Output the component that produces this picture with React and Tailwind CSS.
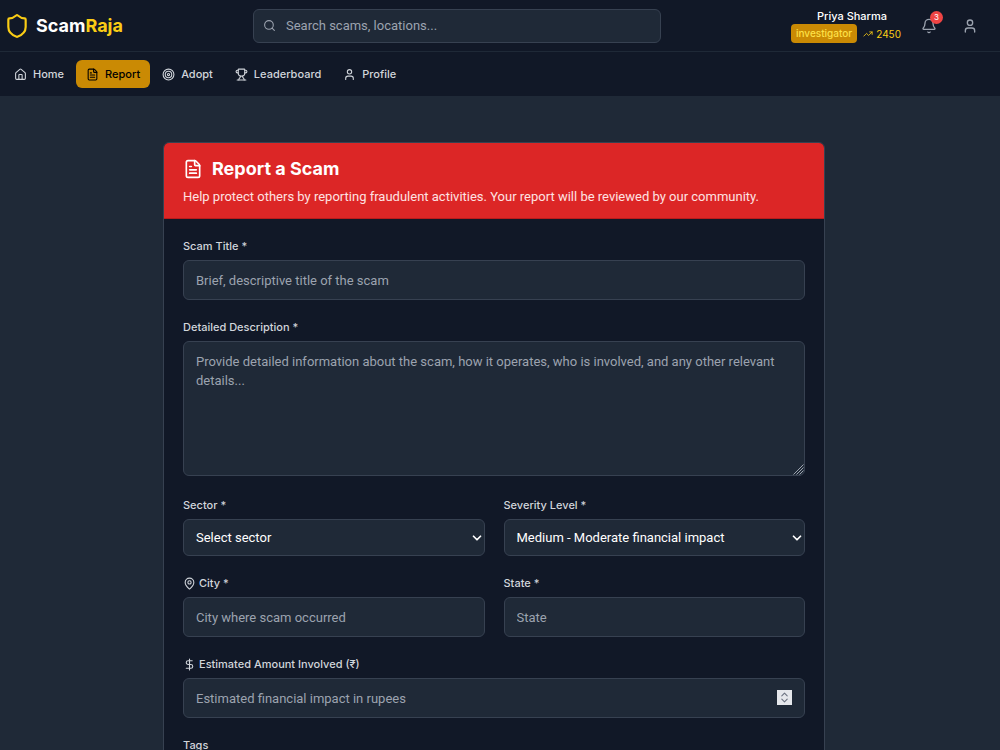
import React from "react";
import {
  Bell,
  ChevronDown,
  ChevronsUpDown,
  DollarSign,
  FileText,
  House,
  MapPin,
  Search,
  Shield,
  Target,
  TrendingUp,
  Trophy,
  User,
} from "lucide-react";

const navItems = [
  { name: "Home", icon: House },
  { name: "Report", icon: FileText },
  { name: "Adopt", icon: Target },
  { name: "Leaderboard", icon: Trophy },
  { name: "Profile", icon: User },
];

const fieldClass =
  "block w-full rounded-md border border-[#374151] bg-[#1f2937] px-3 font-['Roboto',sans-serif] text-[13px] text-white placeholder:text-[#9ca3af] focus:outline-none focus:border-yellow-500";

const Field = ({ id, label, icon: Icon, children }) => (
  <div>
    <label
      htmlFor={id}
      className="mb-[5px] flex items-center text-[11px] leading-[17px] font-medium text-[#d1d5db]"
    >
      {Icon && <Icon className="mr-[3px] size-[13px]" />}
      {label}
    </label>
    {children}
  </div>
);

const Select = ({ id, options }) => (
  <div className="relative">
    <select id={id} className={`${fieldClass} h-[37px] appearance-none`}>
      {options.map((option) => (
        <option key={option}>{option}</option>
      ))}
    </select>
    <ChevronDown
      className="pointer-events-none absolute right-px top-3 size-[14px] text-white"
      strokeWidth={3}
    />
  </div>
);

const Header = () => (
  <header className="border-b border-[#1f2937] bg-[#111827]">
    <div className="flex h-[51px] items-center justify-between pl-1 pr-4">
      <a href="#" className="flex items-center gap-[6px]">
        <Shield className="size-[26px] text-[#facc15]" />
        <span className="text-lg leading-6 font-bold text-white">
          Scam<span className="text-[#facc15]">Raja</span>
        </span>
      </a>

      <div className="relative w-[408px]">
        <Search className="absolute left-[10px] top-[10px] size-[13px] text-[#9ca3af]" />
        <input
          type="search"
          aria-label="Search"
          placeholder="Search scams, locations..."
          className="block h-[34px] w-full rounded-md border border-[#374151] bg-[#1f2937] pl-8 pr-3 font-['Roboto',sans-serif] text-[13px] text-white placeholder:text-[#9ca3af] focus:outline-none"
        />
      </div>

      <div className="flex items-center gap-[14px]">
        <div className="flex flex-col items-center">
          <p className="pl-3 text-[11px] leading-4 font-medium text-white">
            Priya Sharma
          </p>
          <div className="flex items-center gap-[6px]">
            <span className="rounded bg-[#ca8a04] px-[5px] py-px text-[10px] leading-[17px] font-medium text-[#fde047]">
              investigator
            </span>
            <span className="flex items-center gap-[3px] text-[10px] leading-4 text-[#facc15]">
              <TrendingUp className="size-[10px]" />
              2450
            </span>
          </div>
        </div>
        <div className="flex items-center gap-[13px]">
          <button
            type="button"
            aria-label="Notifications"
            className="relative p-[6px] text-[#9ca3af] hover:text-white"
          >
            <Bell className="size-4" />
            <span className="absolute right-0 top-0 flex size-[13px] -translate-y-px items-center justify-center rounded-full bg-[#ef4444] text-[8px] leading-none text-white">
              3
            </span>
          </button>
          <button
            type="button"
            aria-label="Account"
            className="p-[6px] text-[#9ca3af] hover:text-white"
          >
            <User className="size-4" />
          </button>
        </div>
      </div>
    </div>
  </header>
);

const Navigation = () => (
  <nav className="flex h-[45px] items-center gap-[2px] border-b border-[#1f2937] bg-[#111827] px-1">
    {navItems.map(({ name, icon: Icon }) => (
      <a
        key={name}
        href="#"
        className={
          name === "Report"
            ? "flex h-7 items-center gap-[6px] rounded-md bg-[#ca8a04] px-[10px] text-[11px] font-medium text-black"
            : "flex h-7 items-center gap-[6px] rounded-md px-[10px] text-[11px] font-medium text-[#d1d5db] hover:bg-[#1f2937]"
        }
      >
        <Icon className="size-[13px]" />
        {name}
      </a>
    ))}
  </nav>
);

const ReportForm = () => (
  <section className="mx-auto w-full max-w-[662px] overflow-hidden rounded-md border border-[#374151] bg-[#111827]">
    <div className="border-b border-[#b91c1c] bg-[#dc2626] px-[19px] pt-[13px] pb-[11px]">
      <h1 className="flex items-center gap-[9px] text-lg leading-[25px] font-bold text-white">
        <FileText className="size-5" />
        Report a Scam
      </h1>
      <p className="mt-[6px] font-['Roboto',sans-serif] text-[13px] leading-5 text-[#fee2e2]">
        Help protect others by reporting fraudulent activities. Your report will
        be reviewed by our community.
      </p>
    </div>

    <form className="flex flex-col gap-[19px] p-[19px]">
      <Field id="title" label="Scam Title *">
        <input
          id="title"
          type="text"
          placeholder="Brief, descriptive title of the scam"
          className={`${fieldClass} h-10`}
        />
      </Field>

      <Field id="description" label="Detailed Description *">
        <div className="relative mb-[2px]">
          <textarea
            id="description"
            placeholder="Provide detailed information about the scam, how it operates, who is involved, and any other relevant details..."
            className={`${fieldClass} h-[135px] py-[10px] leading-[19px] [&::-webkit-resizer]:bg-transparent`}
          />
          {/* resize grip */}
          <svg
            className="pointer-events-none absolute bottom-px right-px size-[11px] text-[#9ca3af]"
            viewBox="0 0 11 11"
            stroke="currentColor"
            fill="none"
          >
            <path d="M0.5 10.5l10-10M3.5 10.5l7-7M6.5 10.5l4-4" />
          </svg>
        </div>
      </Field>

      <div className="grid grid-cols-2 gap-[19px]">
        <Field id="sector" label="Sector *">
          <Select id="sector" options={["Select sector"]} />
        </Field>
        <Field id="severity" label="Severity Level *">
          <Select
            id="severity"
            options={["Medium - Moderate financial impact"]}
          />
        </Field>
      </div>

      <div className="grid grid-cols-2 gap-[19px]">
        <Field id="city" label="City *" icon={MapPin}>
          <input
            id="city"
            type="text"
            placeholder="City where scam occurred"
            className={`${fieldClass} h-10`}
          />
        </Field>
        <Field id="state" label="State *">
          <input
            id="state"
            type="text"
            placeholder="State"
            className={`${fieldClass} h-10`}
          />
        </Field>
      </div>

      <Field id="amount" label="Estimated Amount Involved (₹)" icon={DollarSign}>
        <div className="relative">
          <input
            id="amount"
            type="number"
            placeholder="Estimated financial impact in rupees"
            className={`${fieldClass} h-10 [&::-webkit-inner-spin-button]:appearance-none`}
          />
          <span className="pointer-events-none absolute right-[13px] top-3 flex size-[15px] items-center justify-center bg-[#e5e7eb] text-[#6b7280]">
            <ChevronsUpDown className="size-[13px]" />
          </span>
        </div>
      </Field>

      <Field id="tags" label="Tags">
        <input id="tags" type="text" className={`${fieldClass} h-10`} />
      </Field>
    </form>
  </section>
);

const App = () => {
  return (
    <div className="min-h-screen bg-[#1f2937] font-['Inter',sans-serif]">
      <Header />
      <Navigation />
      <main className="py-[45px] pl-4 pr-7">
        <ReportForm />
      </main>
    </div>
  );
};

export default App;
